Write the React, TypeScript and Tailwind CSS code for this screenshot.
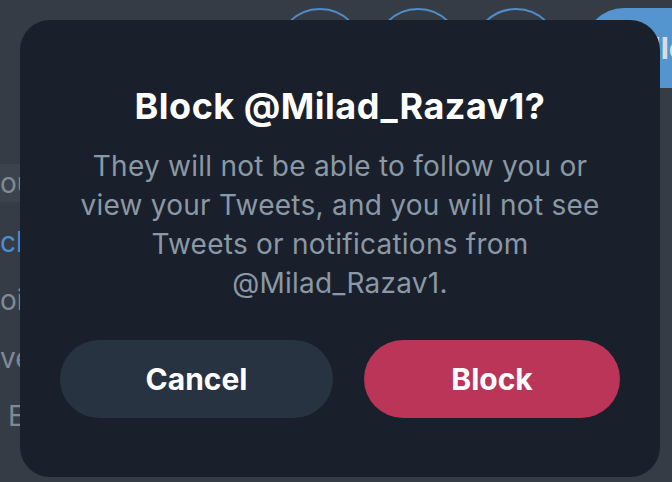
import React from "react";

const FONT = { fontFamily: "Inter, 'Noto Sans', 'Liberation Sans', sans-serif" };

/* background page rows peeking out from under the dialog */
const menuRows = [
  { text: "ou", color: "text-[#7f8a95]", shift: "ml-0" },
  { text: "ck", color: "text-[#4a8fd1]", shift: "ml-0" },
  { text: "oin", color: "text-[#7f8a95]", shift: "ml-0" },
  { text: "ve", color: "text-[#7f8a95]", shift: "ml-0" },
  { text: "Em", color: "text-[#7f8a95]", shift: "ml-[8px]" },
];

export default function App() {
  return (
    <div
      className="relative w-[672px] h-[482px] overflow-hidden bg-[#353c46]"
      style={FONT}
    >
      {/* ===== BACKGROUND PAGE ===== */}
      <div className="flex">
        {/* left menu */}
        <div className="flex flex-col w-[60px] pt-[164px]">
          {menuRows.map((row, i) => (
            <div
              key={row.text}
              className={
                i === 0
                  ? "flex items-center h-[38px] mb-[11px] bg-[#3c434c]"
                  : "flex items-center h-[58px]"
              }
            >
              <span
                className={`whitespace-nowrap text-[28px] leading-none ${row.color} ${row.shift}`}
              >
                {row.text}
              </span>
            </div>
          ))}
        </div>

        {/* profile action buttons */}
        <div className="flex items-start gap-[10px] pt-[8px] pl-[227px]">
          <div className="w-[88px] h-[88px] shrink-0 rounded-full border-2 border-[#4f8dc8]" />
          <div className="w-[88px] h-[88px] shrink-0 rounded-full border-2 border-[#4f8dc8]" />
          <div className="w-[88px] h-[88px] shrink-0 rounded-full border-2 border-[#4f8dc8]" />
          <div className="ml-[14px] flex items-center h-[80px] pl-[33px] pr-[30px] shrink-0 rounded-full bg-[#5495cf] text-[30px] font-bold text-[#d9dde1] whitespace-nowrap">
            Following
          </div>
        </div>
      </div>

      {/* ===== BLOCK DIALOG ===== */}
      <div className="absolute left-[20px] top-[20px] w-[640px] h-[457px] rounded-[30px] bg-[#19202b] flex flex-col items-center px-10 pt-[65px]">
        <h1 className="text-[36px] leading-[42px] font-bold text-white tracking-[0.5px]">
          Block @Milad_Razav1?
        </h1>

        <p className="mt-[20px] text-[28px] leading-[39px] text-[#8b98a5] text-center tracking-[0.25px]">
          They will not be able to follow you or view your Tweets, and you will
          not see Tweets or notifications from @Milad_Razav1.
        </p>

        <div className="flex w-full justify-between mt-[37px]">
          <button className="w-[273px] h-[78px] rounded-full bg-[#273340] text-[30px] font-bold text-white">
            Cancel
          </button>
          <button className="w-[256px] h-[78px] rounded-full bg-[#bb3558] text-[30px] font-bold text-white">
            Block
          </button>
        </div>
      </div>
    </div>
  );
}
